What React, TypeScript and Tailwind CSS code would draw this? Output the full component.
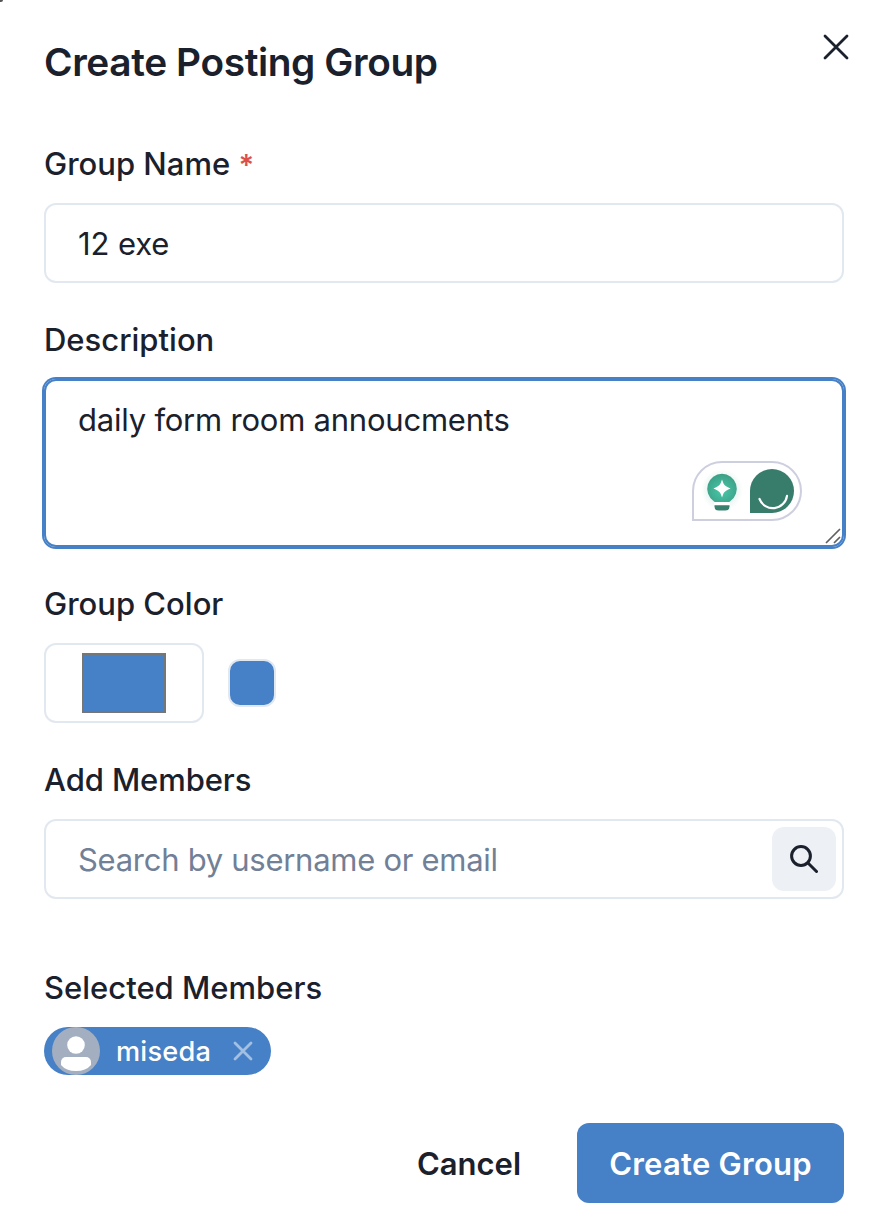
import type { ReactNode } from 'react';

function Label({ children, className = '' }: { children: ReactNode; className?: string }) {
  return <label className={`block h-12 text-[31px] leading-[48px] font-medium ${className}`}>{children}</label>;
}

function WritingAssistant() {
  return (
    <svg className="absolute left-[648px] top-[82px] h-[60px] w-[110px]" viewBox="0 0 110 60" fill="none">
      <defs>
        <radialGradient id="bulb" cx="0.5" cy="0.6" r="0.6">
          <stop offset="0" stopColor="#49c8a8" />
          <stop offset="1" stopColor="#3c9f86" />
        </radialGradient>
        <radialGradient id="glow">
          <stop offset="0.6" stopColor="#3fa68c" stopOpacity="0.12" />
          <stop offset="1" stopColor="#3fa68c" stopOpacity="0" />
        </radialGradient>
      </defs>
      <path d="M30 1H80A29 29 0 0 1 80 59H1V30A29 29 0 0 1 30 1Z" fill="#fff" stroke="#cdcfdf" strokeWidth="2" />
      <circle cx="30" cy="29" r="21" fill="url(#glow)" />
      <path d="M30 12.8A15 15 0 0 1 38.5 40Q38 41 36.5 41H23.5Q22 41 21.5 40A15 15 0 0 1 30 12.8Z" fill="url(#bulb)" />
      <path d="M22 41H38V44H22Z" fill="#fff" />
      <path d="M22.5 44.3H37.5V45.5A4 4 0 0 1 33.5 49.5H26.500A4 4 0 0 1 22.500 45.500Z" fill="#38806e" />
      <path d="M30 18.5Q30.500 20 31.500 22.500Q32.500 25 38.500 27.500Q32.500 30 31.500 32.500Q30.500 35 30 36.500Q29.500 35 28.500 32.500Q27.500 30 21.500 27.500Q27.500 25 28.500 22.500Q29.500 20 30 18.500Z" fill="#fff" />
      <path d="M58 52V30A22 22 0 1 1 80 52Z" fill="#387c6c" />
      <path d="M67.500 38A14.300 14.300 0 0 0 95 34.800" stroke="#fff" strokeWidth="2.200" strokeLinecap="round" />
    </svg>
  );
}

export default function App() {
  return (
    <main className="relative h-[1232px] w-[881px] overflow-hidden bg-white pl-11 pr-[37px] font-['Inter',sans-serif] text-[#1a202c]">
      <header className="flex h-[140px] items-start justify-between pt-[34px]">
        <h1 className="text-[38.8px] leading-[56px] font-semibold tracking-[-0.38px] whitespace-nowrap">Create Posting Group</h1>
        <button aria-label="Close" className="-mr-[5px]">
          <svg className="h-[26px] w-[26px]" viewBox="0 0 26 26" fill="none" stroke="currentColor" strokeWidth="2.8" strokeLinecap="round">
            <path d="M2 2L24 24M24 2L2 24" />
          </svg>
        </button>
      </header>

      <Label>Group Name <span className="text-[29px] font-semibold text-[#dd5048]">*</span></Label>
      <input defaultValue="12 exe" className="mt-[15px] block h-20 w-full rounded-xl border-2 border-[#e2e8f0] px-8 text-[31px] tracking-[-0.1px]" />

      <Label className="mt-[33px]">Description</Label>
      <div className="relative mt-[15px] h-[168px]">
        <textarea defaultValue="daily form room annoucments" className="block h-[168px] w-full resize-none rounded-xl border-2 border-[#4680c6] px-8 pt-[17px] text-[31px] leading-[44px] tracking-[-0.22px] shadow-[0_0_0_2px_#4680c6] outline-none" />
        <WritingAssistant />
        <svg className="absolute right-[3px] bottom-[3px] h-4 w-4" viewBox="0 0 16 16" fill="none" stroke="#606060" strokeWidth="1.7">
          <path d="M1 15L15 1M9 15L15 9" />
        </svg>
      </div>

      <Label className="mt-[33px]">Group Color</Label>
      <div className="mt-[15px] flex h-20 items-center gap-6">
        <button aria-label="Pick color" className="flex h-20 w-40 items-center justify-center rounded-xl border-2 border-[#e2e8f0]">
          <span className="h-[60px] w-[84px] border-2 border-[#767676] bg-[#4680c6]" />
        </button>
        <span className="h-12 w-12 rounded-xl border-2 border-[#e2e8f0] bg-[#4680c6]" />
      </div>

      <Label className="mt-[33px] tracking-[-0.1px]">Add Members</Label>
      <div className="mt-[15px] flex h-20 items-center rounded-xl border-2 border-[#e2e8f0] pr-[6px]">
        <input placeholder="Search by username or email" className="h-full min-w-0 flex-1 pl-8 text-[31px] tracking-[-0.28px] outline-none placeholder:text-[#718096]" />
        <button aria-label="Search" className="flex h-16 w-16 items-center justify-center rounded-xl bg-[#edf0f5]">
          <svg className="h-7 w-7" viewBox="0 0 28 28" fill="none" stroke="currentColor" strokeWidth="3" strokeLinecap="round">
            <circle cx="11" cy="11" r="9.4" />
            <path d="M18 18L26.5 26.5" />
          </svg>
        </button>
      </div>

      <Label className="mt-[65px]">Selected Members</Label>
      <div className="mt-[15px] flex h-12 w-[227px] items-center rounded-full bg-[#4680c6] pl-2 text-white">
        <svg className="h-12 w-12 shrink-0" viewBox="0 0 48 48">
          <circle cx="24" cy="24" r="24" fill="#a3afc0" />
          <circle cx="24" cy="18" r="8.8" fill="#fff" />
          <path d="M9 38V35A5 5 0 0 1 14 30H34A5 5 0 0 1 39 35V38Q34 44 24 44Q14 44 9 38Z" fill="#fff" />
        </svg>
        <span className="ml-4 w-[95px] pt-px text-[27.2px] leading-[40px] font-medium tracking-[0.2px] whitespace-nowrap">miseda</span>
        <button aria-label="Remove miseda" className="ml-[22px] opacity-50">
          <svg className="h-5 w-5" viewBox="0 0 20 20" fill="none" stroke="currentColor" strokeWidth="2.8" strokeLinecap="round">
            <path d="M2 2L18 18M18 2L2 18" />
          </svg>
        </button>
      </div>

      <footer className="mt-12 flex h-20 items-center justify-end gap-6">
        <button className="h-20 w-[168px] pt-0.5 text-[31px] font-semibold">Cancel</button>
        <button className="h-20 w-[267px] rounded-xl bg-[#4680c6] pt-0.5 text-[31px] font-semibold tracking-[0.25px] whitespace-nowrap text-white">Create Group</button>
      </footer>
      <span className="absolute top-0 left-0 h-[2px] w-[3px] rounded-br-full bg-[#555]" />
    </main>
  );
}
